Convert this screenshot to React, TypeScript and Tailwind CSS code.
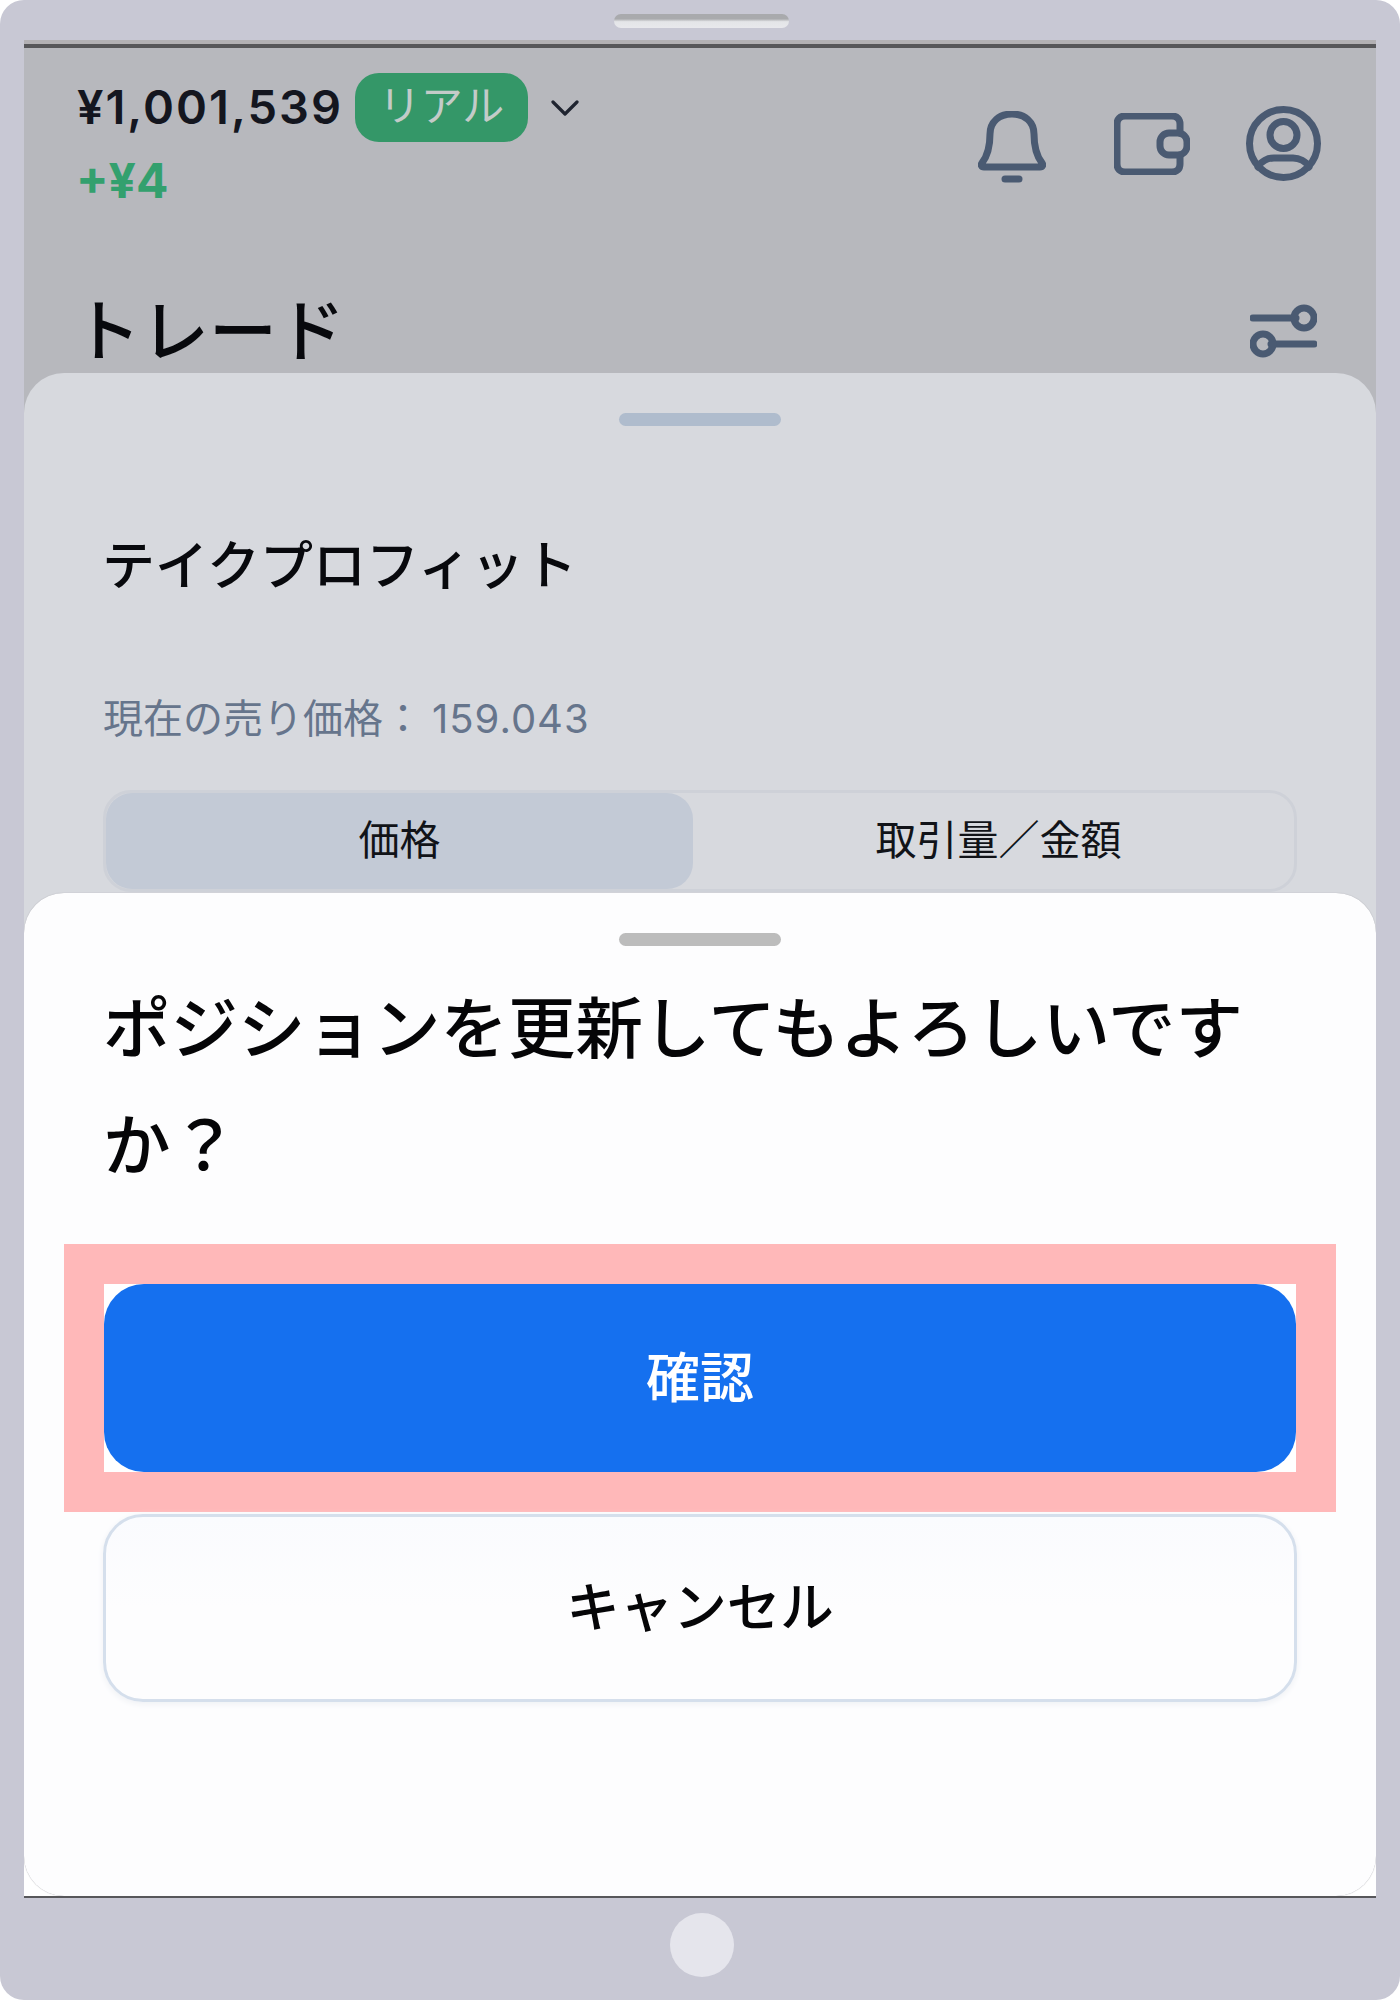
export default function App() {
  const font = { fontFamily: 'Inter, "Noto Sans CJK JP", sans-serif' };
  return (
    <div style={font} className="w-[1400px] h-[2000px] bg-white">
      <div className="w-full h-full bg-[#c8c8d4] rounded-[24px] flex flex-col px-[24px] pt-[40px] relative">
        <div className="absolute left-[614px] top-[14px] w-[175px] h-[14px] rounded-[7px] bg-[linear-gradient(#a9aaad_0,#a9aaad_35%,#e4e5e8_55%,#e8e8ec_100%)]" />
        <div className="w-full h-[1858px] flex flex-col bg-[#b7b8bd] overflow-hidden border-t-[4px] border-b-[2px] border-t-[#b3b1b4] border-b-[#57575a]">
          <div className="h-[4px] bg-[#57575a] shrink-0" />
          {/* header */}
          <div className="h-[325px] shrink-0 pl-[53px] pr-[55px] pt-[25px] flex flex-col">
            <div className="flex justify-between h-[140px]">
              <div className="flex flex-col">
                <div className="flex items-center h-[69px]">
                  <span className="text-[47px] font-semibold tracking-[2px] text-[#14161f] leading-none w-[278px] whitespace-nowrap -mt-[2px]">¥1,001,539</span>
                  <span className="h-[69px] w-[173px] rounded-[24px] bg-[#349768] text-[#c3cbc8] text-[42px] leading-[66px] text-center">リアル</span>
                  <svg className="ml-[23px]" width="28" height="16" viewBox="0 0 28 16" fill="none" stroke="#1f2430" strokeWidth="3.2" strokeLinecap="round" strokeLinejoin="round"><path d="M2 2l12 12L26 2" /></svg>
                </div>
                <span className="mt-[17px] text-[48px] font-bold leading-[44px] text-[#33a06e] -ml-[1px]">+¥4</span>
              </div>
              <div className="flex items-start pt-[35px] gap-[68px]">
                <svg className="mt-[3px]" width="68" height="72" viewBox="0 0 68 72" fill="none" stroke="#4a5a72" strokeWidth="7" strokeLinecap="round" strokeLinejoin="round">
                  <path d="M4 52c7-9 8-19 8-29C12 11 21 3 34 3s22 8 22 20c0 10 1 20 8 29 1.500 2 .5 4-2 4H6c-2.500 0-3.500-2-2-4z" />
                  <path d="M27 68h14" />
                </svg>
                <svg className="mt-[5px]" width="76" height="62" viewBox="0 0 76 62" fill="none" stroke="#4a5a72" strokeWidth="7" strokeLinecap="round" strokeLinejoin="round">
                  <path d="M66 20V11c0-5-3-8-8-8H11C6 3 3 6 3 11v40c0 5 3 8 8 8h47c5 0 8-3 8-8v-9" />
                  <rect x="46" y="20" width="27" height="22" rx="9" />
                </svg>
                <svg className="-mt-[2px] -ml-[12px]" width="75" height="75" viewBox="0 0 75 75" fill="none" stroke="#4a5a72" strokeWidth="7" strokeLinecap="round">
                  <circle cx="37.500" cy="37.500" r="34" />
                  <circle cx="37.500" cy="29" r="13.500" />
                  <path d="M12 61c3-6 10-9 16-9h19c6 0 13 3 16 9" />
                </svg>
              </div>
            </div>
            <div className="flex justify-between items-start mt-[83px]">
              <span className="text-[68px] leading-[71px] font-medium text-[#08090d] -ml-[4px]">トレード</span>
              <svg className="mt-[8px] mr-[4px]" width="67" height="54" viewBox="0 0 67 54" fill="none" stroke="#4a5a72" strokeWidth="7" strokeLinecap="round">
                <path d="M3 14h43" />
                <circle cx="54" cy="14" r="10" />
                <path d="M64 40H21" />
                <circle cx="13" cy="40" r="10" />
              </svg>
            </div>
          </div>
          {/* background sheet */}
          <div className="flex-1 flex flex-col">
            <div className="h-[520px] shrink-0 flex flex-col bg-[#d7d9de] rounded-t-[40px] px-[80px]">
              <div className="mt-[40px] mx-auto w-[162px] h-[13px] rounded-[7px] bg-[#afbccd]" />
              <div className="mt-[110px] text-[53px] leading-[60px] font-medium text-[#08090d] -ml-[2px]">テイクプロフィット</div>
              <div className="mt-[99px] text-[40px] leading-[48px] text-[#66758c] whitespace-nowrap -ml-[1px]">現在の売り価格：<span className="ml-[9px] tracking-[1px]">159.043</span></div>
              <div className="mt-[47px] -ml-[1px] w-[1194px] h-[102px] shrink-0 flex border-[3px] border-[#ced1d8] rounded-[28px] text-[41px] text-[#111318]">
                <div className="w-[587px] bg-[#c3cad6] rounded-[26px] flex items-center justify-center">価格</div>
                <div className="flex-1 flex items-center justify-center pl-[10px]">取引量／金額</div>
              </div>
            </div>
            {/* confirm dialog */}
            <div className="flex-1 flex flex-col items-center bg-[#d7d9de] relative">
              <div className="absolute inset-x-0 bottom-0 h-[60px] bg-white" />
              <div className="w-full h-full relative flex flex-col bg-[#fdfdfe] rounded-[40px] shadow-[0_0_1px_#9a9aa2] px-[80px]">
                <div className="mt-[40px] mx-auto w-[162px] h-[13px] rounded-[7px] bg-[#bcbcbc] shrink-0" />
                <div className="mt-[24px] -ml-[1px] text-[67.500px] leading-[117px] text-[#050507] font-medium">ポジションを更新してもよろしいですか？</div>
                <div className="mt-[40px] -mx-[40px] shrink-0 bg-[#ffb8b9] p-[40px]">
                  <div className="bg-white h-[188px]">
                    <button className="w-full h-full rounded-[40px] bg-[#1570ef] text-white text-[54px] font-medium">確認</button>
                  </div>
                </div>
                <button className="mt-[2px] -mx-[1px] h-[188px] shrink-0 rounded-[40px] border-[3px] border-[#d5dfec] bg-[linear-gradient(#fafbfe,#fdfdfe_50%)] shadow-[0_2px_6px_#eef0f4] text-[53.500px] font-medium text-[#050507]">キャンセル</button>
              </div>
            </div>
          </div>
        </div>
        <div className="flex-1 flex items-center justify-center pl-[3px]">
          <div className="w-[64px] h-[64px] rounded-full bg-[#e5e5ec] -mt-[9px]" />
        </div>
      </div>
    </div>
  );
}
